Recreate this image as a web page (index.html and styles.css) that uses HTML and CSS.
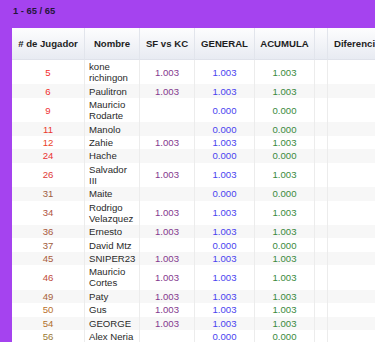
FILE: index.html
```html
<!DOCTYPE html>
<html lang="es">
<head>
<meta charset="utf-8">
<link rel="stylesheet" href="styles.css">
</head>
<body>
<div class="pager">1 - 65 / 65</div>
<div class="tablewrap">
<table class="grid">
<thead>
<tr>
<th class="w1"># de Jugador</th>
<th class="w2">Nombre</th>
<th class="w3">SF vs KC</th>
<th class="w4">GENERAL</th>
<th class="w5">ACUMULA</th>
<th class="w6"></th>
<th class="w7">Diferencia</th>
</tr>
</thead>
<tbody>
<tr><td class="num" style="color:#f42b2b">5</td><td class="name">kone<br>richingon</td><td class="sf">1.003</td><td class="gen">1.003</td><td class="acu">1.003</td><td></td><td></td></tr>
<tr><td class="num" style="color:#f02e2c">6</td><td class="name">Paulitron</td><td class="sf">1.003</td><td class="gen">1.003</td><td class="acu">1.003</td><td></td><td></td></tr>
<tr><td class="num" style="color:#ee3030">9</td><td class="name">Mauricio<br>Rodarte</td><td class="sf"></td><td class="gen">0.000</td><td class="acu">0.000</td><td></td><td></td></tr>
<tr><td class="num" style="color:#ea372e">11</td><td class="name">Manolo</td><td class="sf"></td><td class="gen">0.000</td><td class="acu">0.000</td><td></td><td></td></tr>
<tr><td class="num" style="color:#ea462a">12</td><td class="name">Zahie</td><td class="sf">1.003</td><td class="gen">1.003</td><td class="acu">1.003</td><td></td><td></td></tr>
<tr><td class="num" style="color:#ea3030">24</td><td class="name">Hache</td><td class="sf"></td><td class="gen">0.000</td><td class="acu">0.000</td><td></td><td></td></tr>
<tr><td class="num" style="color:#e03a36">26</td><td class="name">Salvador<br>III</td><td class="sf">1.003</td><td class="gen">1.003</td><td class="acu">1.003</td><td></td><td></td></tr>
<tr><td class="num" style="color:#9e5e42">31</td><td class="name">Maite</td><td class="sf"></td><td class="gen">0.000</td><td class="acu">0.000</td><td></td><td></td></tr>
<tr><td class="num" style="color:#b0543e">34</td><td class="name">Rodrigo<br>Velazquez</td><td class="sf">1.003</td><td class="gen">1.003</td><td class="acu">1.003</td><td></td><td></td></tr>
<tr><td class="num" style="color:#a8583a">36</td><td class="name">Ernesto</td><td class="sf">1.003</td><td class="gen">1.003</td><td class="acu">1.003</td><td></td><td></td></tr>
<tr><td class="num" style="color:#a05c3c">37</td><td class="name">David Mtz</td><td class="sf"></td><td class="gen">0.000</td><td class="acu">0.000</td><td></td><td></td></tr>
<tr><td class="num" style="color:#aa5a3a">45</td><td class="name">SNIPER23</td><td class="sf">1.003</td><td class="gen">1.003</td><td class="acu">1.003</td><td></td><td></td></tr>
<tr><td class="num" style="color:#c04a3a">46</td><td class="name">Mauricio<br>Cortes</td><td class="sf">1.003</td><td class="gen">1.003</td><td class="acu">1.003</td><td></td><td></td></tr>
<tr><td class="num" style="color:#a8623a">49</td><td class="name">Paty</td><td class="sf">1.003</td><td class="gen">1.003</td><td class="acu">1.003</td><td></td><td></td></tr>
<tr><td class="num" style="color:#b8702c">50</td><td class="name">Gus</td><td class="sf">1.003</td><td class="gen">1.003</td><td class="acu">1.003</td><td></td><td></td></tr>
<tr><td class="num" style="color:#b0702a">54</td><td class="name">GEORGE</td><td class="sf">1.003</td><td class="gen">1.003</td><td class="acu">1.003</td><td></td><td></td></tr>
<tr><td class="num" style="color:#9a7a34">56</td><td class="name">Alex Neria</td><td class="sf"></td><td class="gen">0.000</td><td class="acu">0.000</td><td></td><td></td></tr>
</tbody>
</table>
</div>
</body>
</html>
```
FILE: styles.css
```css
html, body {
  margin: 0;
  padding: 0;
  background: #a543ef;
  overflow: hidden;
  font-family: "Liberation Sans", Arial, sans-serif;
}

.pager {
  height: 28px;
  box-sizing: border-box;
  padding: 5px 0 0 13px;
  font-size: 9.4px;
  font-weight: bold;
  color: #24163a;
  line-height: 11px;
}

.tablewrap {
  margin-left: 12px;
  background: #ffffff;
  width: 480px;
}

.grid {
  border-collapse: separate;
  border-spacing: 0;
  table-layout: fixed;
  width: 480px;
  font-size: 9.6px;
}

.grid th {
  box-sizing: border-box;
  height: 32px;
  padding: 0 4px;
  font-weight: bold;
  color: #1e1e1e;
  text-align: center;
  white-space: nowrap;
  overflow: hidden;
  background: linear-gradient(#fdfdfe, #e8ebf2);
  border-right: 1px solid #e2e5ec;
  border-bottom: 1px solid #dfe2ea;
}

.grid th.w7 {
  text-align: left;
  padding-left: 6px;
}

.w1 { width: 73px; }
.w2 { width: 55px; }
.w3 { width: 55px; }
.w4 { width: 60px; }
.w5 { width: 60px; }
.w6 { width: 13px; }
.w7 { width: 164px; }

.grid td {
  box-sizing: border-box;
  padding: 1.22px 4px;
  line-height: 11px;
  text-align: center;
  white-space: nowrap;
  border-right: 1px solid #ececec;
  color: #333;
}

.grid tbody tr:nth-child(even) td {
  background: #f7f7f7;
}

.grid td.name {
  text-align: left;
  color: #2a2a2a;
}

.grid td.sf { color: #84398e; }
.grid td.gen { color: #4a3ff0; }
.grid td.acu { color: #3a8a3c; }
```
